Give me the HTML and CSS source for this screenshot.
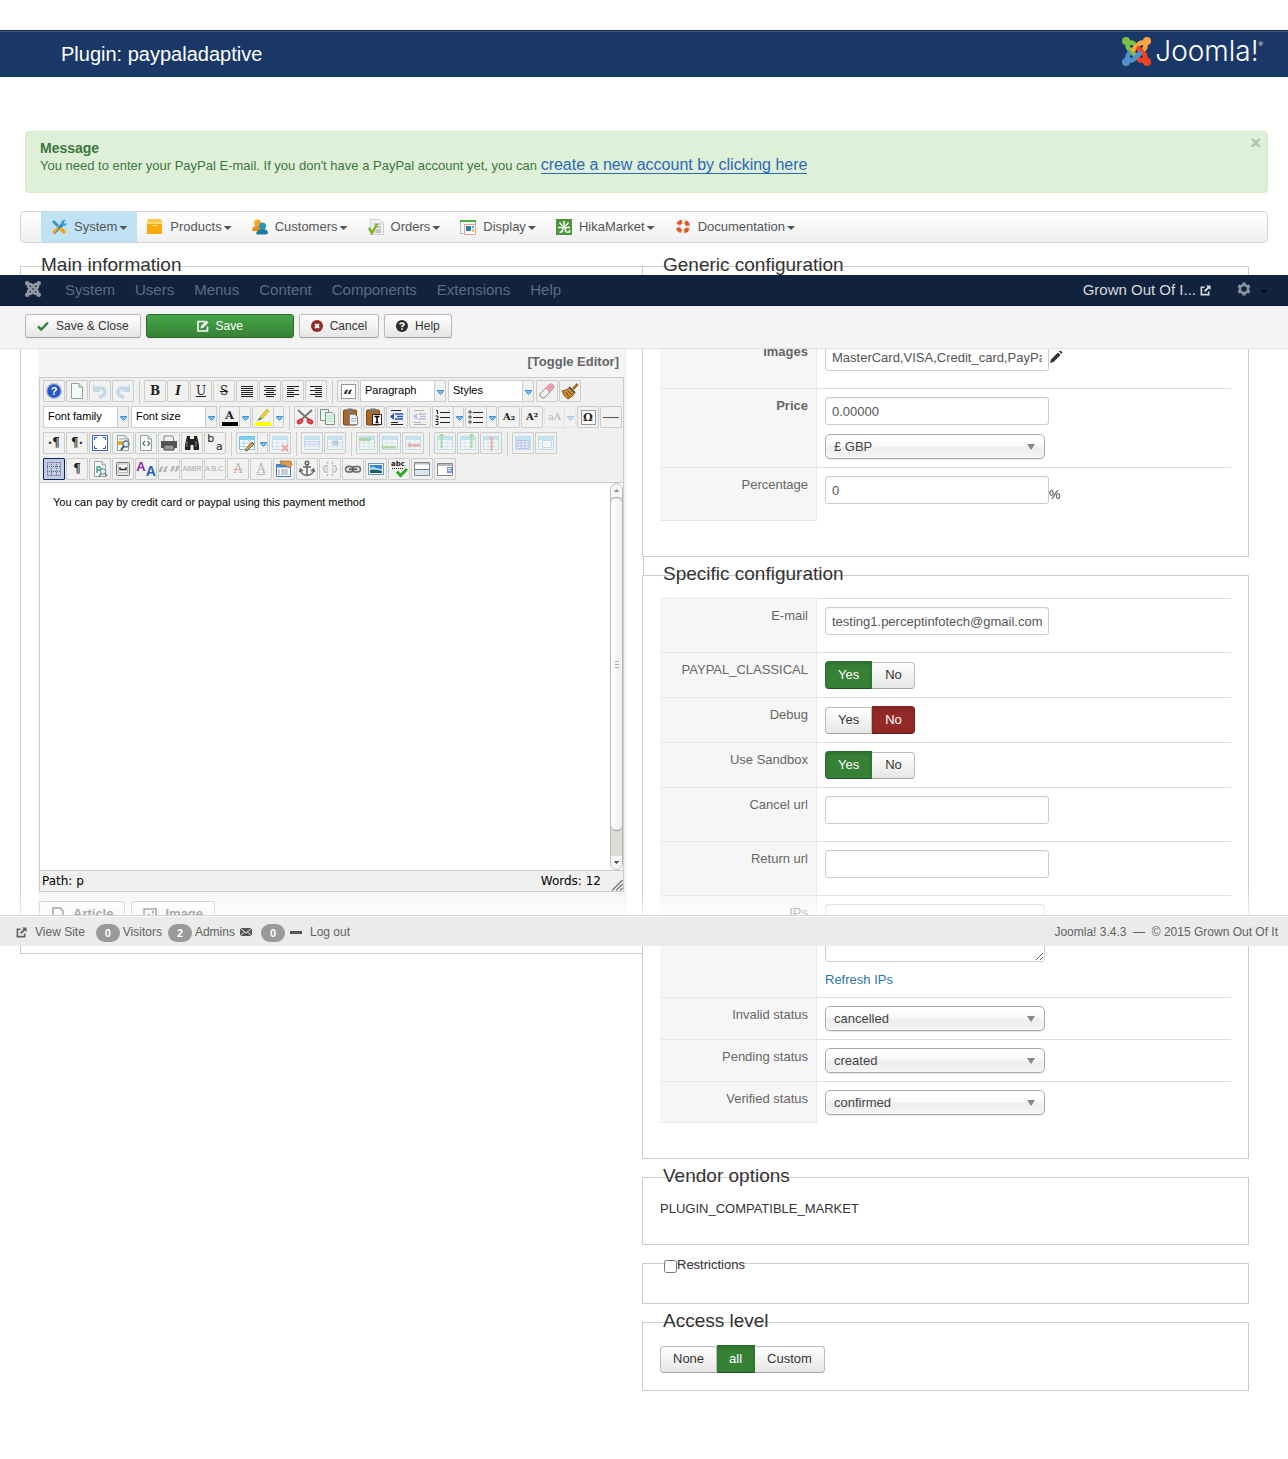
FILE: index.html
```html
<!DOCTYPE html>
<html lang="en">
<head>
<meta charset="utf-8">
<meta name="viewport" content="width=device-width, initial-scale=1">
<title>Plugin: paypaladaptive</title>
<link rel="stylesheet" href="styles.css">
</head>
<body>
<svg class="defs" aria-hidden="true">
  <symbol id="joomla-arm" viewBox="0 0 29 29"><circle cx="4" cy="4" r="4" fill="currentColor"/><path d="M13.500 8.500Q11.500 5 7.500 5.500Q4.500 8 6.500 11.500L14 19" fill="none" stroke="currentColor" stroke-width="4.600"/></symbol>
  <symbol id="out" viewBox="0 0 12 12"><path d="M5 2.500H1.500V10.500H9.500V7" fill="none" stroke="currentColor" stroke-width="1.800"/><path d="M6.500 0.500H11.500V5.500L9.700 3.800L5.800 7.700L4.300 6.200L8.200 2.300Z" fill="currentColor"/></symbol>
  <symbol id="page" viewBox="0 0 20 20"><path d="M4.500 2.500H12L15.500 6V17.500H4.500Z" fill="#f4faf7" stroke="#8fa39b"/><path d="M12 2.500V6H15.500" fill="#d8e6e0" stroke="#8fa39b"/></symbol>
  <symbol id="grid" viewBox="0 0 20 20"><path d="M2.500 3.500H17.500V16.500H2.500Z" fill="#fff" stroke="#6fc4e8"/><path d="M3 4H17V7H3Z" fill="#7fd0f2"/><path d="M3 10H17M3 13.500H17M7 7V16M12 7V16" stroke="#a8d6ea"/></symbol>
  <symbol id="clip" viewBox="0 0 20 20"><rect x="2.500" y="3" width="13" height="15" rx="1" fill="#a8672d" stroke="#7c4718"/><rect x="6" y="1.500" width="6" height="3.500" rx="1" fill="#777"/></symbol>
</svg>
<div class="page">
  <header class="header">
    <h1 class="page-title">Plugin: paypaladaptive</h1>
    <a class="logo" href="#" aria-label="Joomla!">
      <svg width="29" height="29" viewBox="0 0 29 29" aria-hidden="true">
        <use href="#joomla-arm" color="#7ac143"/>
        <use href="#joomla-arm" color="#f9a541" transform="rotate(90 14.5 14.5)"/>
        <use href="#joomla-arm" color="#f44321" transform="rotate(180 14.5 14.5)"/>
        <use href="#joomla-arm" color="#5091cd" transform="rotate(270 14.5 14.5)"/>
      </svg>
      <span class="logo-text">Joomla!</span><span class="logo-mark">®</span>
    </a>
  </header>

  <section class="alert">
    <button class="alert-close" type="button" aria-label="Close">×</button>
    <h2 class="alert-title">Message</h2>
    <p class="alert-text">You need to enter your PayPal E-mail. If you don't have a PayPal account yet, you can <a class="alert-link" href="#">create a new account by clicking here</a></p>
  </section>

  <nav class="menubar">
    <a class="menu-item active" href="#"><svg width="16" height="16" viewBox="0 0 16 16"><path d="M3 14L12 5" stroke="#1f7fb8" stroke-width="3"/><path d="M10 3Q12 0 15 1L13 3L14 5L16 4Q15 8 11 7Z" fill="#3aa2d8"/><path d="M1 3L3 1L8 6L6 8Z" fill="#3f8fc0"/><path d="M9 9L14 14" stroke="#f6a21a" stroke-width="3.500"/><path d="M2 14L7 9" stroke="#f6a21a" stroke-width="2.500"/></svg>System<i class="caret"></i></a>
    <a class="menu-item" href="#"><svg width="16" height="16" viewBox="0 0 16 16"><path d="M1 0H14L15 3H0Z" fill="#fbc94a"/><path d="M0 3H15V15H0Z" fill="#fba80c"/><path d="M0 3H15V5H0Z" fill="#ffd970"/><path d="M5 6H10V7H5Z" fill="#ffe9ae"/></svg>Products<i class="caret"></i></a>
    <a class="menu-item" href="#"><svg width="16" height="16" viewBox="0 0 16 16"><circle cx="5.500" cy="4" r="3.500" fill="#f9a825"/><path d="M0 12Q0 7 5 7Q9 7 9 12Z" fill="#f28c13"/><circle cx="10.500" cy="7" r="3.600" fill="#2b97b8"/><path d="M4 15Q5 10 10.500 10Q16 10 16 14Q16 15.500 10 15.500Q5 15.500 4 15Z" fill="#1d7da0"/></svg>Customers<i class="caret"></i></a>
    <a class="menu-item" href="#"><svg width="16" height="16" viewBox="0 0 16 16"><path d="M2.500 0.500H12L15.500 4V15.500H2.500Z" fill="#f0f2f3" stroke="#ccd"/><path d="M6 5H13M6 8H13M8 11H13M7 13H13" stroke="#999"/><path d="M1 9L4 14L9 5" fill="none" stroke="#7cb518" stroke-width="2.500"/></svg>Orders<i class="caret"></i></a>
    <a class="menu-item" href="#"><svg width="16" height="16" viewBox="0 0 16 16"><rect x="0.500" y="1.500" width="15" height="13" fill="#f4f4f4" stroke="#bbb"/><path d="M0 1H16V3H0Z" fill="#41b13f"/><path d="M4.500 5.500H15.500V15.500H4.500Z" fill="#fff" stroke="#e99"/><path d="M6 7H11V12H6Z" fill="#1b82ad"/><path d="M12 7H14V9H12Z" fill="#4ab"/><path d="M12 10H14V13H12Z" fill="#fb3"/></svg>Display<i class="caret"></i></a>
    <a class="menu-item" href="#"><svg width="16" height="16" viewBox="0 0 16 16"><path d="M0 0H16V16H0Z" fill="#4c9637"/><path d="M8 2V8M3.500 3.500L6.500 7M12.500 3.500L9.500 7M2 8.500H14M7 9Q7 13 3.500 13.500M9.500 9V12.500Q10 13.500 13.500 13V11" fill="none" stroke="#fff" stroke-width="1.500"/></svg>HikaMarket<i class="caret"></i></a>
    <a class="menu-item" href="#"><svg width="16" height="16" viewBox="0 0 16 16"><circle cx="8" cy="7.500" r="5" fill="none" stroke="#e9eaec" stroke-width="5"/><circle cx="8" cy="7.500" r="5" fill="none" stroke="#e2571d" stroke-width="4" stroke-dasharray="4.600 3.254" stroke-dashoffset="-1.600"/></svg>Documentation<i class="caret"></i></a>
  </nav>

  <main class="columns">
    <fieldset class="panel panel-main">
      <legend class="panel-title">Main information</legend>
      <div class="editor-cell">
        <div class="toggle-row"><a class="toggle" href="#">[Toggle Editor]</a></div>
        <div class="editor">
          <div class="tools">
            <div class="tool-row">
              <button class="tool" aria-label="Help"><svg viewBox="0 0 20 20"><circle cx="10" cy="10" r="7.500" fill="#2756c8" stroke="#bcc6dd" stroke-width="1.500"/></svg><b class="glyph-help">?</b></button>
              <button class="tool" aria-label="New document"><svg viewBox="0 0 20 20"><use href="#page"/></svg></button>
              <button class="tool dim" aria-label="Undo"><svg viewBox="0 0 20 20"><path d="M6 7H11Q15 8 15 11Q15 15 9 16" fill="none" stroke="#7fb6dd" stroke-width="3.500"/><path d="M3 3V11H11Z" fill="#7fb6dd"/></svg></button>
              <button class="tool dim" aria-label="Redo"><svg viewBox="0 0 20 20"><path d="M14 7H9Q5 8 5 11Q5 15 11 16" fill="none" stroke="#7fb6dd" stroke-width="3.500"/><path d="M17 3V11H9Z" fill="#7fb6dd"/></svg></button>
              <i class="sep"></i>
              <button class="tool serif"><b>B</b></button>
              <button class="tool serif"><b><em>I</em></b></button>
              <button class="tool serif"><u>U</u></button>
              <button class="tool serif"><s>S</s></button>
              <button class="tool" aria-label="Justify"><svg viewBox="0 0 20 20"><path d="M4 5.500H16M4 7.500H16M4 9.500H16M4 11.500H16M4 13.500H16M4 15.500H16" stroke="#222"/></svg></button>
              <button class="tool" aria-label="Align center"><svg viewBox="0 0 20 20"><path d="M4 5.500H16M6 7.500H14M4 9.500H16M6 11.500H14M4 13.500H16M6 15.500H14" stroke="#222"/></svg></button>
              <button class="tool" aria-label="Align left"><svg viewBox="0 0 20 20"><path d="M4 5.500H16M4 7.500H11M4 9.500H16M4 11.500H11M4 13.500H16M4 15.500H11" stroke="#222"/></svg></button>
              <button class="tool" aria-label="Align right"><svg viewBox="0 0 20 20"><path d="M4 5.500H16M9 7.500H16M4 9.500H16M9 11.500H16M4 13.500H16M9 15.500H16" stroke="#222"/></svg></button>
              <i class="sep"></i>
              <button class="tool framed"><b>“</b></button>
              <button class="listbox"><span>Paragraph</span><i class="drop"></i></button>
              <button class="listbox"><span>Styles</span><i class="drop"></i></button>
              <button class="tool" aria-label="Remove formatting"><svg viewBox="0 0 20 20"><path d="M3 13L12 3.500Q14 2 16 4L17 6Q17 7 8 16Q6 18 4 16Q2 14 3 13Z" fill="#f3f3f3" stroke="#888"/><path d="M8.500 7L12 3.500Q14 2 16 4L17 6L12 11.500Z" fill="#ee9aa8"/></svg></button>
              <button class="tool" aria-label="Cleanup"><svg viewBox="0 0 20 20"><path d="M12 7L17 2L18.500 4L14 9Z" fill="#a06a20"/><path d="M2 10Q8 9 10 6L15 11Q13 16 8 18Q4 16 2 10Z" fill="#c98a35" stroke="#8b5a1c"/><path d="M9 6L15 12" stroke="#555" stroke-width="1.500"/><path d="M6 11L9 16M8 10L12 14" stroke="#7c4d12"/></svg></button>
            </div>
            <div class="tool-row">
              <button class="listbox"><span>Font family</span><i class="drop"></i></button>
              <button class="listbox"><span>Font size</span><i class="drop"></i></button>
              <button class="tool split serif"><b class="swatch">A</b><i class="drop"></i></button>
              <button class="tool split" aria-label="Highlight color"><svg viewBox="0 0 20 20"><path d="M7 10L14 2L16 4L9 12Z" fill="#e8d42a" stroke="#a89a20" stroke-width="0.600"/><path d="M7 10L9 12L4 14Z" fill="#666"/><path d="M2 15H18V19H2Z" fill="#ff0"/></svg><i class="drop"></i></button>
              <i class="sep"></i>
              <button class="tool" aria-label="Cut"><svg viewBox="0 0 20 20"><path d="M3 3L14 13M17 3L6 13" stroke="#777" stroke-width="2"/><ellipse cx="5" cy="14.500" rx="2.500" ry="1.500" fill="#f08a8a" stroke="#d8343b" stroke-width="2" transform="rotate(-30 5 14.500)"/><ellipse cx="15" cy="14.500" rx="2.500" ry="1.500" fill="#f08a8a" stroke="#d8343b" stroke-width="2" transform="rotate(30 15 14.500)"/></svg></button>
              <button class="tool" aria-label="Copy"><svg viewBox="0 0 20 20"><path d="M2.500 2.500H10.500V13.500H2.500Z" fill="#eef6f2" stroke="#779188"/><path d="M7.500 5.500H14L16.500 8V17.500H7.500Z" fill="#eef6f2" stroke="#779188"/><path d="M9 9H15M9 11.500H15M9 14H15" stroke="#9db"/></svg></button>
              <button class="tool" aria-label="Paste"><svg viewBox="0 0 20 20"><use href="#clip"/><path d="M8.500 7.500H14L16.500 10V17.500H8.500Z" fill="#eef4f8" stroke="#789"/><path d="M10 11.500H15M10 14H15" stroke="#9ab"/></svg></button>
              <button class="tool" aria-label="Paste as text"><svg viewBox="0 0 20 20"><use href="#clip"/><path d="M8.500 7.500H17.500V17.500H8.500Z" fill="#fff" stroke="#222"/><path d="M10.500 9.500H15.500M13 9.500V16M11.500 15.500H14.500" stroke="#000" stroke-width="1.500"/></svg></button>
              <button class="tool" aria-label="Outdent"><svg viewBox="0 0 20 20"><path d="M4 3.500H14M4 15.500H11M4 17.500H16" stroke="#222"/><path d="M8 7H16M10 9.500H16M8 12H16" stroke="#2b50d8" stroke-width="1.700"/><path d="M3 9.500L7 6V13Z" fill="#2b50d8"/></svg></button>
              <button class="tool dim" aria-label="Indent"><svg viewBox="0 0 20 20"><path d="M4 3.500H14M4 15.500H11M4 17.500H16" stroke="#555"/><path d="M8 7H16M10 9.500H16M8 12H16" stroke="#6b7fc8" stroke-width="1.700"/><path d="M3 9.500L7 6V13Z" fill="#6b7fc8"/></svg></button>
              <button class="tool split" aria-label="Numbered list"><svg viewBox="0 0 20 20"><path d="M7 5.500H17M7 10.500H17M7 15.500H17M3 3.500H4.500V7M2.500 9H5V10.500L3 12.500H5.500M2.500 14.500H5V17.500H2.500" fill="none" stroke="#222"/></svg><i class="drop"></i></button>
              <button class="tool split" aria-label="Bullet list"><svg viewBox="0 0 20 20"><path d="M7 5.500H17M7 10.500H17M7 15.500H17" stroke="#222"/><path d="M3 4H5V6H3ZM3 9H5V11H3ZM3 14H5V16H3Z" fill="none" stroke="#444"/></svg><i class="drop"></i></button>
              <button class="tool serif small"><b>A₂</b></button>
              <button class="tool serif small"><b>A²</b></button>
              <button class="tool split dim off serif small"><span>aA</span><i class="drop"></i></button>
              <button class="tool framed"><b class="omega">Ω</b></button>
              <button class="tool" aria-label="Horizontal rule"><svg viewBox="0 0 20 20"><path d="M2 10.500H18" stroke="#555"/></svg></button>
            </div>
            <div class="tool-row">
              <button class="tool serif"><b>·¶</b></button>
              <button class="tool serif"><b>¶·</b></button>
              <button class="tool" aria-label="Fullscreen"><svg viewBox="0 0 20 20"><path d="M2.500 2.500H17.500V17.500H2.500Z" fill="#fff" stroke="#3a5fd8"/><path d="M4.500 7V4.500H7M13 4.500H15.500V7M15.500 13V15.500H13M7 15.500H4.500V13" fill="none" stroke="#2b50d8"/></svg></button>
              <button class="tool" aria-label="Preview"><svg viewBox="0 0 20 20"><use href="#page"/><path d="M5 8H10V12H5Z" fill="#e2b020"/><circle cx="13" cy="11" r="3" fill="#dcecf6" stroke="#678" stroke-width="1.300"/><path d="M11 13L8 17" stroke="#357" stroke-width="2"/><path d="M6 6H11" stroke="#999"/></svg></button>
              <button class="tool" aria-label="Source code"><svg viewBox="0 0 20 20"><use href="#page"/><path d="M9 8L7 10.500L9 13M11.500 8L13.500 10.500L11.500 13" fill="none" stroke="#555" stroke-width="1.200"/></svg></button>
              <button class="tool" aria-label="Print"><svg viewBox="0 0 20 20"><path d="M5 3H14L15 9H5Z" fill="#f2f2f2" stroke="#888"/><path d="M2 8H18V15H2Z" fill="#555"/><path d="M5 12H15V17H5Z" fill="#999" stroke="#444"/></svg></button>
              <button class="tool" aria-label="Find"><svg viewBox="0 0 20 20"><path d="M5 3H8V6H12V3H15L17 12V17H11.500V12H8.500V17H3V12Z" fill="#222"/><path d="M5 8V14M14 8V14" stroke="#888"/></svg></button>
              <button class="tool replace"><span>b</span><span>a</span></button>
              <i class="sep"></i>
              <button class="tool split" aria-label="Table"><svg viewBox="0 0 20 20"><use href="#grid"/><path d="M8 17L15 9L17 11L10 18Z" fill="#e5a52c" stroke="#854"/></svg><i class="drop"></i></button>
              <button class="tool dim" aria-label="Delete table"><svg viewBox="0 0 20 20"><use href="#grid"/><path d="M12 12L18 18M18 12L12 18" stroke="#d33" stroke-width="2"/></svg></button>
              <i class="sep"></i>
              <button class="tool dim" aria-label="Row properties"><svg viewBox="0 0 20 20"><use href="#grid"/><path d="M3.500 8.500H16.500V11.500H3.500Z" fill="#d4e0fa" stroke="#8ca4ea"/></svg></button>
              <button class="tool dim" aria-label="Cell properties"><svg viewBox="0 0 20 20"><use href="#grid"/><path d="M8 8H13V12H8Z" fill="#7c98ea" stroke="#5c7fe0"/></svg></button>
              <i class="sep"></i>
              <button class="tool dim" aria-label="Insert row before"><svg viewBox="0 0 20 20"><use href="#grid"/><path d="M1 6L4 4V5H14V8H4V9Z" fill="#4cb03a"/></svg></button>
              <button class="tool dim" aria-label="Insert row after"><svg viewBox="0 0 20 20"><use href="#grid"/><path d="M1 14L4 12V13H16V15.500H4V17Z" fill="#4cb03a"/></svg></button>
              <button class="tool dim" aria-label="Delete row"><svg viewBox="0 0 20 20"><use href="#grid"/><path d="M4 12L7 9V11H17V13.500H7V15Z" fill="#e05048"/></svg></button>
              <i class="sep"></i>
              <button class="tool dim" aria-label="Insert column before"><svg viewBox="0 0 20 20"><use href="#grid"/><path d="M4 1H9L7.500 4V15H5.500V4Z" fill="#4cb03a"/></svg></button>
              <button class="tool dim" aria-label="Insert column after"><svg viewBox="0 0 20 20"><use href="#grid"/><path d="M11 1H16L14.500 4V15H12.500V4Z" fill="#4cb03a"/></svg></button>
              <button class="tool dim" aria-label="Delete column"><svg viewBox="0 0 20 20"><use href="#grid"/><path d="M8 4H13L11.500 7V18H9.500V7Z" fill="#e05048"/></svg></button>
              <i class="sep"></i>
              <button class="tool dim" aria-label="Split cells"><svg viewBox="0 0 20 20"><use href="#grid"/><path d="M4 7.500H16V15.500H4ZM4 10H16M4 13H16M8 7V16M12 7V16" fill="#e6ebff" stroke="#5c7fe0"/></svg></button>
              <button class="tool dim" aria-label="Merge cells"><svg viewBox="0 0 20 20"><use href="#grid"/><path d="M6.500 7.500H15.500V14.500H6.500Z" fill="#fff" stroke="#7fb6dd"/></svg></button>
            </div>
            <div class="tool-row">
              <button class="tool on" aria-label="Show guidelines"><svg viewBox="0 0 20 20"><path d="M3.500 3.500H16.500V16.500H3.500ZM3 7.500H17M3 12.500H17M7.500 3V17M12.500 3V17" fill="none" stroke="#56658c" stroke-dasharray="1 1"/></svg></button>
              <button class="tool serif"><b>¶</b></button>
              <button class="tool" aria-label="Page preview"><svg viewBox="0 0 20 20"><use href="#page"/><path d="M7 14V8H10Q12 9.500 10 11H7" fill="none" stroke="#3a9a83" stroke-width="1.300"/><circle cx="13" cy="12.500" r="2.800" fill="#e2f0f8" stroke="#68808c"/><path d="M11 15L9 17.500M15 14.500L17 17" stroke="#68808c" stroke-width="1.500"/></svg></button>
              <button class="tool" aria-label="Nonbreaking space"><svg viewBox="0 0 20 20"><rect x="3.500" y="3.500" width="13" height="13" rx="1" fill="#e6e6e2" stroke="#777"/><rect x="5.500" y="5" width="9" height="8.500" fill="#fff" stroke="#bbb"/><path d="M7 8V10.500H13V8" fill="none" stroke="#222" stroke-width="1.300"/></svg></button>
              <button class="tool style-aa"><b>A</b><b>A</b></button>
              <button class="tool quotes dim"><b>“”</b></button>
              <button class="tool tiny dim">ABBR</button>
              <button class="tool tiny dim">A.B.C.</button>
              <button class="tool serif dim"><s class="red">A</s></button>
              <button class="tool serif dim"><u class="blue">A</u></button>
              <button class="tool" aria-label="Attributes"><svg viewBox="0 0 20 20"><path d="M2.500 5.500H16.500V17.500H2.500Z" fill="#fff" stroke="#377cc5"/><path d="M3 6H16V8.500H3Z" fill="#3f8de0"/><path d="M4 11H6M7 11H14M4 13H6M7 13H14M4 15H6M7 15H14" stroke="#89a"/><path d="M6 2H17L18 6L15 9L11 6H7Z" fill="#dd9c52" stroke="#a96a2c" stroke-width="0.700"/></svg></button>
              <button class="tool" aria-label="Anchor"><svg viewBox="0 0 20 20"><circle cx="10" cy="4" r="1.800" fill="none" stroke="#666" stroke-width="1.500"/><path d="M10 6V16M6 8H14M3.500 11Q4 16 10 16.500Q16 16 16.500 11M2.500 13L3.500 10L6 12M17.500 13L16.500 10L14 12" fill="none" stroke="#666" stroke-width="1.500"/></svg></button>
              <button class="tool dim" aria-label="Unlink"><svg viewBox="0 0 20 20"><path d="M8 7H5Q2 10 5 13H8M12 7H15Q18 10 15 13H12M6 10H8M12 10H14M7 3L8 5M13 3L12 5M7 17L8 15M13 17L12 15" fill="none" stroke="#777" stroke-width="1.500"/></svg></button>
              <button class="tool" aria-label="Link"><svg viewBox="0 0 20 20"><rect x="2.500" y="7.500" width="8" height="5.500" rx="2.700" fill="#ddd" stroke="#666" stroke-width="1.400"/><rect x="9.500" y="7.500" width="8" height="5.500" rx="2.700" fill="#ddd" stroke="#666" stroke-width="1.400"/><path d="M6 10.300H14" stroke="#555" stroke-width="1.700"/></svg></button>
              <button class="tool" aria-label="Image"><svg viewBox="0 0 20 20"><path d="M2.500 4.500H17.500V15.500H2.500Z" fill="#fff" stroke="#6c93b8"/><path d="M4 6H16V10H4Z" fill="#2b86cf"/><path d="M4 9Q7 6 10 9L16 10V12H4Z" fill="#a9d4ef"/><path d="M4 11Q8 10 16 12V14H4Z" fill="#1d6069"/></svg></button>
              <button class="tool spell"><span>abc</span><svg viewBox="0 0 20 20"><path d="M8 12.500L11.500 16.500L18 10" fill="none" stroke="#2eaa27" stroke-width="3"/><path d="M3 9.500H14" stroke="#222" stroke-dasharray="1 1"/></svg></button>
              <button class="tool" aria-label="Page break"><svg viewBox="0 0 20 20"><path d="M2.500 3.500H17.500V16.500H2.500Z" fill="#fff" stroke="#888"/><path d="M3 4H17V5.500H3Z" fill="#bbb"/><path d="M3 11H17V16H3Z" fill="#d4e8f6"/><path d="M3 10.500H17" stroke="#777"/></svg></button>
              <button class="tool" aria-label="Template"><svg viewBox="0 0 20 20"><path d="M2.500 4.500H17.500V16.500H2.500Z" fill="#fff" stroke="#888"/><path d="M3 5H17V7H3Z" fill="#bbb"/><path d="M12 8H17V14H12Z" fill="#6f95e0"/><path d="M13 9.500H16M13 11.500H16" stroke="#fff"/></svg></button>
            </div>
          </div>
          <div class="document">
            <p class="document-text">You can pay by credit card or paypal using this payment method</p>
            <div class="scrollbar"><i class="scroll-btn up"></i><i class="thumb"></i><i class="track"></i><i class="scroll-btn down"></i></div>
          </div>
          <div class="statusline"><span>Path: p</span><span class="words">Words: 12</span><svg width="12" height="12" viewBox="0 0 12 12"><path d="M1 11.500L11.500 1M5 11.500L11.500 5M9 11.500L11.500 9" stroke="#777" stroke-width="1.300"/></svg></div>
        </div>
        <div class="insert-buttons">
          <button class="btn insert" type="button"><svg width="14" height="14" viewBox="0 0 14 14"><path d="M2 1H9L12 4V13H2Z" fill="none" stroke="#444" stroke-width="1.600"/></svg>Article</button>
          <button class="btn insert" type="button"><svg width="14" height="14" viewBox="0 0 14 14"><path d="M1 2H13V13H1Z" fill="none" stroke="#444" stroke-width="1.600"/><path d="M3 11L6 6L8 9L10 7L12 11Z" fill="#444"/><circle cx="10" cy="5" r="1.200" fill="#444"/></svg>Image</button>
        </div>
      </div>
    </fieldset>

    <div class="side">
      <fieldset class="panel">
        <legend class="panel-title under-bars">Generic configuration</legend>
        <table class="form">
          <tr><th scope="row"><label for="images"><b>Images</b></label></th><td><div class="with-unit middle"><input id="images" class="text" type="text" value="MasterCard,VISA,Credit_card,PayPal"><svg width="14" height="14" viewBox="0 0 14 14"><path d="M1 13L2 9.500L9 2.500L11.500 5L4.500 12Z" fill="#333"/><path d="M10 1.500L11.500 0.500L13.500 2.500L12.500 4Z" fill="#333"/></svg></div></td></tr>
          <tr><th scope="row"><label for="price"><b>Price</b></label></th><td><input id="price" class="text" type="text" value="0.00000"><select class="choice" aria-label="Currency"><option>£ GBP</option></select></td></tr>
          <tr><th scope="row"><label for="percentage">Percentage</label></th><td><div class="with-unit"><input id="percentage" class="text" type="text" value="0"><span>%</span></div></td></tr>
        </table>
      </fieldset>

      <fieldset class="panel">
        <legend class="panel-title">Specific configuration</legend>
        <table class="form">
          <tr><th scope="row"><label for="email">E-mail</label></th><td><input id="email" class="text" type="text" value="testing1.perceptinfotech@gmail.com"></td></tr>
          <tr><th scope="row">PAYPAL_CLASSICAL</th><td><div class="toggle-group"><label class="seg yes"><input type="radio" name="classical" checked>Yes</label><label class="seg no"><input type="radio" name="classical">No</label></div></td></tr>
          <tr><th scope="row">Debug</th><td><div class="toggle-group"><label class="seg yes"><input type="radio" name="debug">Yes</label><label class="seg no"><input type="radio" name="debug" checked>No</label></div></td></tr>
          <tr><th scope="row">Use Sandbox</th><td><div class="toggle-group"><label class="seg yes"><input type="radio" name="sandbox" checked>Yes</label><label class="seg no"><input type="radio" name="sandbox">No</label></div></td></tr>
          <tr><th scope="row"><label for="cancel-url">Cancel url</label></th><td><input id="cancel-url" class="text" type="text"></td></tr>
          <tr><th scope="row"><label for="return-url">Return url</label></th><td><input id="return-url" class="text" type="text"></td></tr>
          <tr><th scope="row"><label for="ips">IPs</label></th><td><textarea id="ips" class="text area"></textarea><a class="link" href="#">Refresh IPs</a></td></tr>
          <tr><th scope="row"><label for="invalid">Invalid status</label></th><td><select id="invalid" class="choice"><option>cancelled</option></select></td></tr>
          <tr><th scope="row"><label for="pending">Pending status</label></th><td><select id="pending" class="choice"><option>created</option></select></td></tr>
          <tr><th scope="row"><label for="verified">Verified status</label></th><td><select id="verified" class="choice"><option>confirmed</option></select></td></tr>
        </table>
      </fieldset>

      <fieldset class="panel panel-vendor">
        <legend class="panel-title">Vendor options</legend>
        <p class="plain">PLUGIN_COMPATIBLE_MARKET</p>
      </fieldset>

      <fieldset class="panel panel-restrictions">
        <legend class="check-title"><label class="check"><input type="checkbox">Restrictions</label></legend>
      </fieldset>

      <fieldset class="panel panel-access">
        <legend class="panel-title">Access level</legend>
        <div class="toggle-group"><label class="seg"><input type="radio" name="access">None</label><label class="seg yes"><input type="radio" name="access" checked>all</label><label class="seg"><input type="radio" name="access">Custom</label></div>
      </fieldset>
    </div>
  </main>

  <div class="topbars">
    <nav class="navbar">
      <svg class="nav-logo" width="16" height="16" viewBox="0 0 29 29" color="#93979f" aria-hidden="true">
        <use href="#joomla-arm"/>
        <use href="#joomla-arm" transform="rotate(90 14.5 14.5)"/>
        <use href="#joomla-arm" transform="rotate(180 14.5 14.5)"/>
        <use href="#joomla-arm" transform="rotate(270 14.5 14.5)"/>
      </svg>
      <a href="#">System</a><a href="#">Users</a><a href="#">Menus</a><a href="#">Content</a><a href="#">Components</a><a href="#">Extensions</a><a href="#">Help</a>
      <a class="site" href="#">Grown Out Of I... <svg width="11" height="11"><use href="#out"/></svg></a>
      <button class="gear" type="button" aria-label="Settings"><svg width="14" height="14" viewBox="0 0 14 14"><path d="M7 0.500V13.500M1.400 3.700L12.600 10.300M12.600 3.700L1.400 10.300" stroke="#8b93a1" stroke-width="3.400"/><circle cx="7" cy="7" r="4" fill="#10223e" stroke="#8b93a1" stroke-width="2.400"/></svg><i class="caret"></i></button>
    </nav>
    <div class="actions">
      <button class="btn" type="button"><svg width="12" height="12" viewBox="0 0 12 12"><path d="M1 6.500L4.300 9.500L11 2.500" fill="none" stroke="#378137" stroke-width="2.400"/></svg>Save &amp; Close</button>
      <button class="btn primary" type="button"><svg width="12" height="12" viewBox="0 0 12 12"><path d="M8 1.500H1V11H10.500V6.500" fill="none" stroke="#fff" stroke-width="1.600"/><path d="M3.500 8.500L4 6L9.500 0.500L11.500 2.500L6 8Z" fill="#fff"/></svg>Save</button>
      <button class="btn" type="button"><svg width="12" height="12" viewBox="0 0 12 12"><circle cx="6" cy="6" r="6" fill="#942a25"/><path d="M4 4L8 8M8 4L4 8" stroke="#fff" stroke-width="1.800"/></svg>Cancel</button>
      <button class="btn" type="button"><svg width="12" height="12" viewBox="0 0 12 12"><circle cx="6" cy="6" r="6" fill="#2c2c2c"/><path d="M4 4.500Q4 3 6 3Q8 3 8 4.500Q8 5.500 6 6.200V7.200M6 8.200V9.800" fill="none" stroke="#fff" stroke-width="1.600"/></svg>Help</button>
    </div>
  </div>

  <footer class="status">
    <a class="view" href="#"><svg width="11" height="11"><use href="#out"/></svg>View Site</a>
    <span class="badge">0</span><span>Visitors</span>
    <span class="badge">2</span><span>Admins</span>
    <svg class="mail" width="12" height="8" viewBox="0 0 12 8"><path d="M0 0H12V8H0Z" fill="#555"/><path d="M0 0L6 5L12 0M0 8L4.500 4M12 8L7.500 4" fill="none" stroke="#ebebeb"/></svg>
    <span class="badge msgs">0</span>
    <a class="logout" href="#"><i class="minus"></i>Log out</a>
    <span class="copyright">Joomla! 3.4.3 &nbsp;—&nbsp; © 2015 Grown Out Of It</span>
  </footer>
</div>
</body>
</html>
```
FILE: styles.css
```css
* { box-sizing: border-box; }
body { margin: 0; background: #fff; color: #333; font: 13px/18px "Liberation Sans", Arial, sans-serif; }
a { color: inherit; text-decoration: none; }
button, input, select, textarea { font: inherit; }
button { cursor: pointer; }
svg { flex: none; }
.defs { display: none; }
.page { position: relative; padding: 30px 0 68px; }

.caret { width: 8px; height: 4px; margin: 2px 0 0 2px; background: currentColor; clip-path: polygon(0 0, 100% 0, 50% 100%); }

/* Title band */
.header { display: flex; align-items: center; justify-content: space-between; height: 47px; padding: 0 25px 0 61px; background: #1a3867; border-top: 1px solid #132849; box-shadow: inset 0 1px 0 #42597f; color: #fff; }
.page-title { margin: 0; font-size: 20px; line-height: 26px; font-weight: 400; }
.logo { display: flex; align-items: center; gap: 4px; margin-bottom: 6px; }
.logo-text { font: 300 28px/29px Inter, "Liberation Sans", sans-serif; }
.logo-mark { align-self: flex-start; font-size: 6px; line-height: 14px; margin-left: -4px; }

/* System message */
.alert { position: relative; margin: 54px 20px 18px 25px; padding: 7px 35px 17px 14px; min-height: 62px; background: #dff0d8; border: 1px solid #d6e9c6; border-radius: 4px; color: #3c763d; }
.alert-title { margin: 0; font-size: 14px; line-height: 18px; }
.alert-text { margin: 0; line-height: 18px; }
.alert-link { font-size: 16px; line-height: 16px; color: #2a69b8; border-bottom: 1px solid #2a69b8; }
.alert-close { position: absolute; top: 2px; right: 6px; padding: 0; border: 0; background: none; color: #aebfa9; font-size: 18px; line-height: 18px; font-weight: 700; }

/* Component menu */
.menubar { display: flex; height: 32px; margin: 0 20px; padding-left: 20px; border: 1px solid #d4d4d4; border-radius: 4px; background: linear-gradient(#fff, #f0f0f0); }
.menu-item { display: flex; align-items: center; padding: 0 10px; color: #555; }
.menu-item svg { margin-right: 7px; }
.menu-item.active { background: #bfe2f5; }

/* Two-column form */
.columns { display: grid; grid-template-columns: minmax(0, 622fr) minmax(0, 607fr); align-items: start; margin: 23px 39px 0 20px; }
.side { position: relative; display: grid; gap: 18px; }
.panel { min-width: 0; margin: 0; padding: 0 17px 35px; border: 1px solid #ccc; background: #fff; }
.panel-main { margin-right: -2px; padding-bottom: 17px; }
.panel-title { float: left; width: 100%; margin: -15px 0 11px; padding: 0 3px; font-size: 19px; line-height: 26px; }
.panel-title.under-bars { margin-bottom: 56px; }
.panel-title + * { clear: both; }
.panel-vendor { padding-bottom: 26px; }
.panel-access { padding-bottom: 17px; }
.panel-restrictions { padding-bottom: 29px; }
.plain { margin: 0; }
.check-title { float: left; width: 100%; margin-top: -8px; padding: 0 3px; }
.check { display: flex; align-items: center; }
.check input { width: 13px; height: 13px; margin: 3px 0 0 1px; }
.panel-restrictions::after { content: ""; display: block; clear: both; }

.form { width: 100%; border-spacing: 0; }
.form th, .form td { vertical-align: top; padding: 8px; border-top: 1px solid #ddd; text-align: left; }
.form th { width: 157px; background: #f6f6f6; border-top-color: #e9e9e9; border-right: 1px solid #e9e9e9; color: #666; font-weight: 400; text-align: right; }
.form tr:last-child th { border-bottom: 1px solid #e9e9e9; }
.text { display: block; width: 224px; height: 28px; margin: 0 0 9px; padding: 4px 6px; border: 1px solid #ccc; border-radius: 3px; background: #fff; color: #555; box-shadow: inset 0 1px 1px rgba(0, 0, 0, .05); }
.area { width: 220px; height: 58px; resize: both; }
.with-unit { display: flex; align-items: flex-end; margin-bottom: 9px; }
.with-unit .text { margin: 0; }
.with-unit.middle { align-items: center; }
.choice { display: block; width: 220px; height: 25px; padding: 0 8px; border: 1px solid #aaa; border-radius: 5px; appearance: none; color: #444; box-shadow: inset 0 0 3px #fff, 0 1px 1px rgba(0, 0, 0, .1);
  background: url("data:image/svg+xml,%3Csvg xmlns='http://www.w3.org/2000/svg' width='8' height='6'%3E%3Cpath d='M0 0H8L4 6Z' fill='%23888'/%3E%3C/svg%3E") no-repeat right 9px center, linear-gradient(#fff 20%, #f6f6f6 50%, #eee 52%, #f4f4f4 100%); }
.link { display: block; color: #3071a9; }

.toggle-group { display: flex; align-items: flex-end; height: 28px; }
.seg { display: block; height: 27px; padding: 2px 12px; border: 1px solid #bbb; border-bottom-color: #a2a2a2; background: linear-gradient(#fff, #e6e6e6); line-height: 20px; color: #333; text-shadow: 0 1px 1px rgba(255, 255, 255, .75); }
.seg + .seg { border-left-width: 0; }
.seg.yes + .seg.no { padding-left: 13px; }
.seg:first-child { border-radius: 4px 0 0 4px; }
.seg:last-child { border-radius: 0 4px 4px 0; }
.seg input { position: absolute; opacity: 0; pointer-events: none; }
.seg:has(:checked) { height: 28px; padding-top: 3px; color: #fff; text-shadow: none; box-shadow: inset 0 2px 4px rgba(0, 0, 0, .15); }
.seg.yes:has(:checked) { background: #378137; border-color: #2f6f2f #2f6f2f #1f501f; }
.seg.no:has(:checked) { background: #942a25; border-color: #82231f #82231f #5e1714; }

/* Editor */
.editor-cell { padding: 64px 1px 9px; background: #f5f5f5; border-right: 1px solid #ececec; }
.toggle-row { padding: 0 5px 6px; text-align: right; }
.toggle { font-weight: 700; color: #666; }
.editor { border: 1px solid #ccc; background: #f0f0ee; color: #000; }
.tools { display: grid; gap: 2px; padding: 2px 0 0 3px; }
.tool-row { display: flex; gap: 1px; height: 24px; }
.tool { position: relative; display: flex; align-items: center; justify-content: center; flex: none; width: 22px; height: 22px; padding: 0; border: 1px solid #ccc; border-radius: 1px; background: #f1f1ef; color: #222; }
.tool > svg { width: 20px; height: 20px; }
.tool.dim > * { opacity: .4; }
.tool.dim { color: #555; }
.tool.off { border-color: #e4e4e2; }
.tool.on { background: #c2cbe0; border: 1px solid #0a246a; }
.tool.split { width: 32px; justify-content: flex-start; }
.tool.split > :first-child { width: 20px; }
.drop { align-self: stretch; flex: none; width: 11px; border-left: 1px solid #ccc; background: url("data:image/svg+xml,%3Csvg xmlns='http://www.w3.org/2000/svg' width='7' height='5'%3E%3Cpath d='M0.5 0.5H6.5V1.5L3.5 4.5L0.5 1.5Z' fill='%237fc0f0' stroke='%233a8fd0'/%3E%3C/svg%3E") no-repeat center 9px; }
.sep { flex: none; width: 1px; margin: 0 3px 0 4px; background: #ccc; }
.listbox { display: flex; flex: none; width: 86px; height: 22px; margin-right: 1px; padding: 0; border: 1px solid #ccc; background: #fff; color: #000; font-size: 11px; line-height: 18px; text-align: left; }
.listbox span { flex: 1; padding-left: 4px; }
.listbox .drop { background-color: #f0f0ee; }
.serif { font: 12px/18px "DejaVu Serif", serif; }
.serif.small { font-size: 10px; }
.replace { gap: 2px; font: 11px/12px "DejaVu Sans", sans-serif; }
.replace span:first-child { align-self: flex-start; }
.replace span:last-child { align-self: flex-end; }
.tiny { font-size: 7px; line-height: 18px; }
.quotes { font: 20px/28px "DejaVu Serif", serif; }
.quotes b { height: 18px; }
.glyph-help { position: absolute; inset: 0; color: #fff; font-size: 11px; line-height: 20px; }
.tool.dim.tiny { color: #aaa; }
.tool .red { text-decoration-color: #e33; }
.tool .blue { text-decoration-color: #36c; }
.framed b { width: 15px; height: 15px; border: 1px solid #999; background: #fff; font: 700 17px/22px "DejaVu Serif", serif; }
.framed .omega { font-size: 11px; line-height: 13px; }
.swatch { height: 18px; font-size: 11px; line-height: 15px; background: linear-gradient(#000, #000) no-repeat center bottom / 16px 4px; }
.style-aa { color: #1b62b8; font: 14px/16px "Liberation Sans", sans-serif; }
.style-aa b { align-self: flex-end; }
.style-aa b:first-child { align-self: flex-start; color: #8c2a9c; font-size: 13px; }
.spell span { position: absolute; left: 2px; top: 1px; font: 700 7px/8px "DejaVu Sans", sans-serif; }
.document { display: flex; height: 388px; border-top: 1px solid #ccc; background: #fff; }
.document-text { flex: 1; margin: 0; padding: 10px 13px; font-size: 11px; line-height: 18px; }
.scrollbar { display: flex; flex-direction: column; width: 13px; border: 1px solid #bbb; border-radius: 7px; background: #dcdbd8; overflow: hidden; }
.scroll-btn { display: flex; flex: none; align-items: center; justify-content: center; height: 13px; background: #f6f6f5; }
.scroll-btn::before { content: ""; width: 6px; height: 3px; background: #999; clip-path: polygon(50% 0, 100% 100%, 0 100%); }
.scroll-btn.down::before { background: #555; clip-path: polygon(0 0, 100% 0, 50% 100%); }
.thumb { display: flex; align-items: center; justify-content: center; height: 334px; border: solid #999; border-width: 1px 0; border-radius: 6px; background: linear-gradient(90deg, #fff, #eee); }
.thumb::before { content: ""; width: 4px; height: 7px; background: repeating-linear-gradient(#aaa 0 1px, transparent 1px 3px); }
.track { flex: 1; }
.statusline { display: flex; align-items: center; height: 21px; padding: 0 0 0 2px; border-top: 1px solid #ccc; font: 12px/20px "DejaVu Sans", sans-serif; }
.words { margin-left: auto; padding-right: 10px; }
.statusline svg { align-self: flex-end; }
.insert-buttons { display: flex; gap: 6px; padding-top: 9px; }

.btn { display: flex; align-items: center; justify-content: center; gap: 7px; height: 24px; padding: 0 11px; border: 1px solid #bbb; border-bottom-color: #a2a2a2; border-radius: 3px; background: linear-gradient(#fff, #e6e6e6); box-shadow: 0 1px 2px rgba(0, 0, 0, .05); color: #333; font-size: 12px; line-height: 18px; }
.btn.primary { width: 148px; border-color: #2c6a2c; background: linear-gradient(#46a546, #378137); color: #fff; }
.btn.insert { gap: 8px; height: 26px; font-size: 13px; font-weight: 700; }

/* Bars floating over the page */
.topbars { position: absolute; top: 275px; left: 0; right: 0; }
.navbar { display: flex; align-items: center; height: 31px; padding: 0 20px 0 25px; background: #10223e; border-bottom: 1px solid #0a1730; color: #5f6b7e; font-size: 15px; line-height: 20px; }
.navbar a { padding: 0 10px; }
.nav-logo { margin: 0 14px 2px 0; }
.navbar .site { display: flex; align-items: center; gap: 4px; margin-left: auto; padding-right: 26px; color: #d9d9d9; }
.gear { display: flex; align-items: center; gap: 7px; padding: 0 0 2px; border: 0; background: none; color: #050b16; }
.gear .caret { margin-top: 5px; }
.actions { display: flex; gap: 5px; height: 43px; padding: 8px 25px 0; background: #f4f4f4; border-bottom: 1px solid #e0e0e0; }
.status { position: absolute; top: 915px; left: 0; right: 0; display: flex; align-items: center; height: 31px; padding: 2px 10px 0 16px; background: #ebebeb; border-top: 1px solid #d4d4d4; box-shadow: inset 0 1px 0 rgba(255, 255, 255, .8), 0 -15px 15px rgba(255, 255, 255, .6); color: #626262; font-size: 12px; line-height: 18px; }
.view { display: flex; align-items: center; gap: 8px; margin-right: 5px; }
.badge { width: 24px; height: 18px; margin: 2px 3px 0 6px; border-radius: 9px; background: #999; color: #fff; font-size: 11px; line-height: 18px; font-weight: 700; text-align: center; }
.mail { margin: 0 3px 0 5px; }
.msgs { margin-right: 5px; }
.logout { display: flex; align-items: center; gap: 8px; }
.minus { width: 12px; height: 3px; background: #555; }
.copyright { margin-left: auto; }
```
